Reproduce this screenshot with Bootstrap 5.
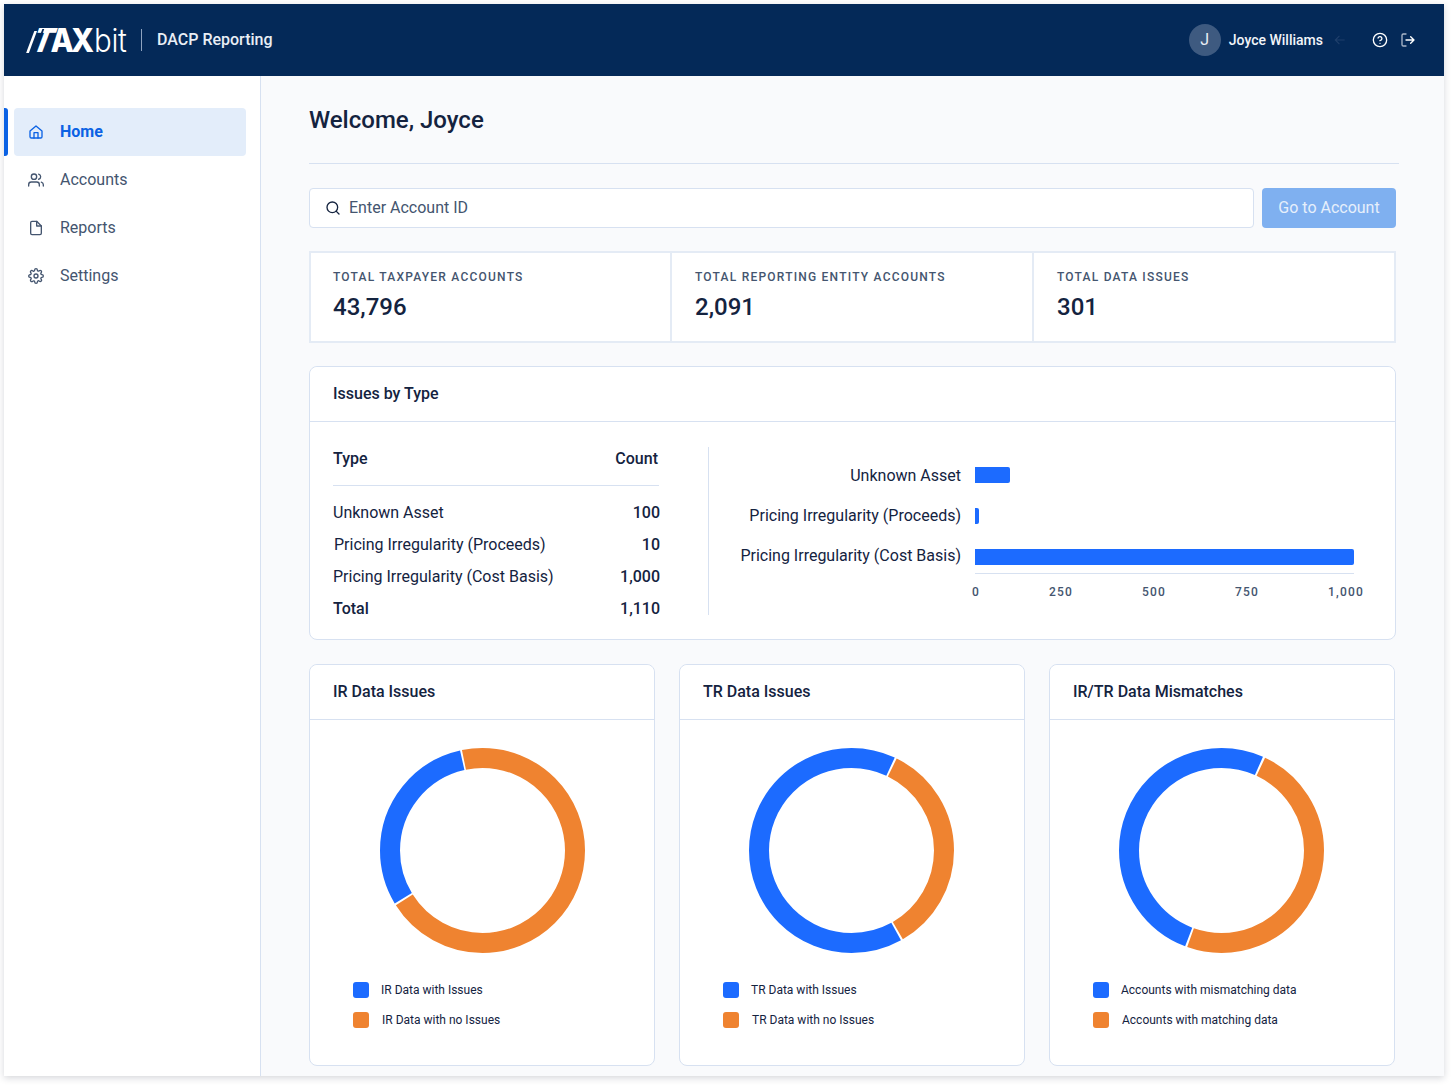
<!DOCTYPE html>
<html lang="en">
<head>
<meta charset="utf-8">
<title>DACP Reporting</title>
<link href="https://cdn.jsdelivr.net/npm/bootstrap@5.3.0/dist/css/bootstrap.min.css" rel="stylesheet">
<style>
html,body{background:#fff;height:100%;overflow:hidden}
body{font-family:Roboto,"Liberation Sans",sans-serif;color:#14233f;font-size:16px}
.app-frame{width:1440px;height:1072px;margin:4px;background:#f9fafc;box-shadow:0 2px 7px rgba(20,30,50,.18);overflow:hidden;display:flex;flex-direction:column}
.top-bar{height:72px;background:#042958;color:#fff;padding:0 28px 0 24px;flex:none;flex-wrap:nowrap}
.brand-mark{font-family:Inter,Roboto,sans-serif;font-size:33px;line-height:33px;color:#fff;display:flex;align-items:baseline;width:98px;position:relative;white-space:nowrap;transform:scaleX(.92);transform-origin:left center}
.brand-tax{font-weight:800;letter-spacing:-3px;display:inline-flex}
.brand-t{display:inline-block;transform:skewX(-22deg);position:relative;margin-left:6px;margin-right:-1px}
.brand-t::before{content:"";position:absolute;left:-3px;top:7px;width:3px;height:22px;background:#fff}
.brand-t::after{content:"";position:absolute;left:5px;top:5px;width:1.5px;height:24px;background:#042958}
.brand-bit{font-weight:300;font-size:32px;margin-left:3px;letter-spacing:-.4px}
.brand-sep{width:1px;height:22px;background:#8fa3bf;margin:0 15px}
.brand-name{font-size:16px;font-weight:500;color:#e9eef5}
.avatar-dot{width:32px;height:32px;border-radius:50%;background:#3e5a80;color:#e8edf4;font-size:16px;line-height:32px;text-align:center}
.user-name{font-size:14px;font-weight:500;margin-left:8px;color:#f2f5f9}
.ghost-arrow{margin-left:10px;margin-right:25px;color:#1f3f6b}
.shell{flex:1;min-height:0}
.side-nav{width:257px;flex:none;background:#fff;border-right:1px solid #d7e1f1;padding-top:32px}
.side-link{height:48px;margin:0 14px 0 10px;padding-left:14px;display:flex;align-items:center;gap:16px;color:#44556f;font-size:16px;text-decoration:none;border-radius:4px;position:relative}
.side-link.is-on{background:#e3edfa;color:#0b62e4;font-weight:700}
.side-link.is-on::before{content:"";position:absolute;left:-10px;top:0;bottom:0;width:4px;background:#0b62e4;border-radius:0 3px 3px 0}
.side-link svg{flex:none}
.main-pane{flex:1;min-width:0;padding:28px 48px 0}
.page-title{font-size:24px;line-height:32px;font-weight:500;margin:0;color:#14233f}
.title-rule{height:1px;background:#d7e1f1;margin:27px -3px 24px 0}
.search-box{flex:1;position:relative}
.search-box svg{position:absolute;left:16px;top:12px}
.search-box .form-control{height:40px;border:1px solid #d7e1f1;border-radius:4px;padding:5px 12px 7px 39px;font-size:16px;color:#44556f}
.search-box .form-control::placeholder{color:#44556f;opacity:1}
.go-btn,.go-btn:disabled{width:134px;height:40px;background:#7fb0f0;border:0;color:#e6effb;font-size:16px;border-radius:4px;opacity:1;padding:0}
.stat-strip{margin-top:23px;border:2px solid #e4ebf5;background:#fff;height:92px}
.stat-cell{width:362px;flex:none;padding:15px 22px 0 23px;border-left:2px solid #e4ebf5}
.stat-cell:first-child{border-left:0;width:359px;padding-left:22px}
.stat-cell:last-child{flex:1;width:auto}
.stat-label{font-size:12px;font-weight:500;letter-spacing:1.22px;color:#44556f;line-height:18px}
.stat-value{font-size:24px;font-weight:500;line-height:32px;margin-top:5px;color:#14233f}
.pane-card{border:1px solid #d7e1f1;border-radius:8px;background:#fff}
.pane-card .card-header{height:55px;padding:0 23px;background:#fff;border-bottom:1px solid #d7e1f1;font-size:16px;font-weight:500;display:flex;align-items:center;border-radius:8px 8px 0 0}
.issues-card{margin-top:23px;height:274px}
.issues-table{width:326px;flex:none;margin:26px 0 0 23px}
.it-head{display:flex;justify-content:space-between;font-weight:500;font-size:16px;line-height:22px;padding:0 1px 15px 0;border-bottom:1px solid #d7e1f1;margin-bottom:11px}
.it-row{display:flex;justify-content:space-between;line-height:32px;height:32px;margin-right:-1px}
.it-num{font-weight:500}
.it-total{font-weight:500}
.nudge-one{margin-left:1px}
.vert-rule{width:1px;height:168px;background:#d7e1f1;margin:25px 0 0 49px;flex:none}
.bar-chart{flex:1;margin:33px 0 0 0}
.bc-row{display:flex;align-items:center;height:40px}
.bc-label{width:266px;text-align:right;padding:2px 14px 0 0;color:#14233f;font-size:16px;flex:none;white-space:nowrap}
.bc-track{width:379px;height:100%;display:flex;align-items:center}
.bc-bar{height:16px;background:#1c6bff;border-radius:0 2px 2px 0}
.bar-mid{margin-top:2px}
.bar-low{margin-top:4px}
.bc-axis{margin-left:266px;width:379px;height:1px;background:#d7e1f1;margin-top:-2px}
.bc-ticks{margin-left:263px;width:392px;display:flex;justify-content:space-between;font-size:12px;font-weight:500;color:#44556f;letter-spacing:1.2px;margin-top:10px;line-height:16px}
.donut-grid{grid-template-columns:repeat(3,346px);margin-top:24px}
.donut-card{height:402px}
.donut-body{padding:28px 0 0 43px}
.donut-svg{display:block;margin-left:26px}
.first-donut{margin-left:27px}
.leg-list{margin-top:22px;font-size:12px;color:#14233f}
.leg-item{display:flex;align-items:center;height:30px;gap:12px}
.leg-swatch{width:16px;height:16px;border-radius:3px;flex:none}
.sw-blue{background:#1c6bff}
.sw-orange{background:#ef8330}
.ring-blue{stroke:#1c6bff}
.ring-orange{stroke:#ef8330}
</style>
</head>
<body>
<div class="app-frame">
  <nav class="navbar top-bar d-flex align-items-center">
    <div class="d-flex align-items-center">
      <div class="brand-mark"><span class="brand-tax"><span class="brand-t">T</span>AX</span><span class="brand-bit">bit</span></div>
      <span class="brand-sep"></span>
      <span class="brand-name">DACP Reporting</span>
    </div>
    <div class="d-flex align-items-center">
      <span class="avatar-dot">J</span>
      <span class="user-name">Joyce Williams</span>
      <svg class="ghost-arrow" width="14" height="14" viewBox="0 0 24 24" fill="none" stroke="currentColor" stroke-width="2"><path d="M20 12H4M11 5l-7 7 7 7"/></svg>
      <svg class="me-1" width="16" height="16" viewBox="0 0 24 24" fill="none" stroke="#fff" stroke-width="2" stroke-linecap="round" stroke-linejoin="round"><circle cx="12" cy="12" r="10"/><path d="M9.09 9a3 3 0 0 1 5.83 1c0 2-3 3-3 3"/><path d="M12 17h.01"/></svg>
      <svg class="ms-2" width="16" height="16" viewBox="0 0 24 24" fill="none" stroke-width="2" stroke-linecap="round" stroke-linejoin="round"><path stroke="#aab7c9" d="M9 21H5a2 2 0 0 1-2-2V5a2 2 0 0 1 2-2h4"/><path stroke="#fff" d="M16 17l5-5-5-5M21 12H9"/></svg>
    </div>
  </nav>
  <div class="shell d-flex">
    <aside class="side-nav">
      <a class="side-link is-on" href="#">
        <svg width="16" height="16" viewBox="0 0 24 24" fill="none" stroke="currentColor" stroke-width="2" stroke-linecap="round" stroke-linejoin="round"><path d="M3 10.5 12 3l9 7.5V19a2 2 0 0 1-2 2H5a2 2 0 0 1-2-2z"/><path d="M9 21v-8h6v8"/></svg>
        Home</a>
      <a class="side-link" href="#">
        <svg width="16" height="16" viewBox="0 0 24 24" fill="none" stroke="currentColor" stroke-width="2" stroke-linecap="round" stroke-linejoin="round"><path d="M17 21v-2a4 4 0 0 0-4-4H5a4 4 0 0 0-4 4v2"/><circle cx="9" cy="7" r="4"/><path d="M23 21v-2a4 4 0 0 0-3-3.87"/><path d="M16 3.13a4 4 0 0 1 0 7.75"/></svg>
        Accounts</a>
      <a class="side-link" href="#">
        <svg width="16" height="16" viewBox="0 0 24 24" fill="none" stroke="currentColor" stroke-width="2" stroke-linecap="round" stroke-linejoin="round"><path d="M13 2H6a2 2 0 0 0-2 2v16a2 2 0 0 0 2 2h12a2 2 0 0 0 2-2V9z"/><path d="M13 2v7h7"/></svg>
        Reports</a>
      <a class="side-link" href="#">
        <svg width="16" height="16" viewBox="0 0 24 24" fill="none" stroke="currentColor" stroke-width="2" stroke-linecap="round" stroke-linejoin="round"><circle cx="12" cy="12" r="3"/><path d="M19.4 15a1.65 1.65 0 0 0 .33 1.82l.06.06a2 2 0 0 1 0 2.83 2 2 0 0 1-2.83 0l-.06-.06a1.65 1.65 0 0 0-1.82-.33 1.65 1.65 0 0 0-1 1.51V21a2 2 0 0 1-2 2 2 2 0 0 1-2-2v-.09A1.65 1.65 0 0 0 9 19.4a1.65 1.65 0 0 0-1.82.33l-.06.06a2 2 0 0 1-2.83 0 2 2 0 0 1 0-2.83l.06-.06a1.65 1.65 0 0 0 .33-1.82 1.65 1.65 0 0 0-1.51-1H3a2 2 0 0 1-2-2 2 2 0 0 1 2-2h.09A1.65 1.65 0 0 0 4.6 9a1.65 1.65 0 0 0-.33-1.82l-.06-.06a2 2 0 0 1 0-2.83 2 2 0 0 1 2.83 0l.06.06a1.65 1.65 0 0 0 1.82.33H9a1.65 1.65 0 0 0 1-1.51V3a2 2 0 0 1 2-2 2 2 0 0 1 2 2v.09a1.65 1.65 0 0 0 1 1.51 1.65 1.65 0 0 0 1.82-.33l.06-.06a2 2 0 0 1 2.83 0 2 2 0 0 1 0 2.83l-.06.06a1.65 1.65 0 0 0-.33 1.82V9a1.65 1.65 0 0 0 1.51 1H21a2 2 0 0 1 2 2 2 2 0 0 1-2 2h-.09a1.65 1.65 0 0 0-1.51 1z"/></svg>
        Settings</a>
    </aside>
    <main class="main-pane">
      <h1 class="page-title">Welcome, Joyce</h1>
      <div class="title-rule"></div>
      <div class="d-flex gap-2">
        <div class="search-box">
          <svg width="16" height="16" viewBox="0 0 24 24" fill="none" stroke="#14233f" stroke-width="2" stroke-linecap="round"><circle cx="11" cy="11" r="8"/><path d="m21 21-4.35-4.35"/></svg>
          <input class="form-control" type="text" placeholder="Enter Account ID">
        </div>
        <button class="btn go-btn" disabled>Go to Account</button>
      </div>
      <section class="stat-strip d-flex">
        <div class="stat-cell"><div class="stat-label">TOTAL TAXPAYER ACCOUNTS</div><div class="stat-value">43,796</div></div>
        <div class="stat-cell"><div class="stat-label">TOTAL REPORTING ENTITY ACCOUNTS</div><div class="stat-value">2,091</div></div>
        <div class="stat-cell"><div class="stat-label">TOTAL DATA ISSUES</div><div class="stat-value">301</div></div>
      </section>
      <section class="card pane-card issues-card">
        <div class="card-header">Issues by Type</div>
        <div class="d-flex">
          <div class="issues-table">
            <div class="it-head"><span>Type</span><span>Count</span></div>
            <div class="it-row"><span>Unknown Asset</span><span class="it-num">100</span></div>
            <div class="it-row"><span class="nudge-one">Pricing Irregularity (Proceeds)</span><span class="it-num">10</span></div>
            <div class="it-row"><span>Pricing Irregularity (Cost Basis)</span><span class="it-num">1,000</span></div>
            <div class="it-row it-total"><span>Total</span><span class="it-num">1,110</span></div>
          </div>
          <div class="vert-rule"></div>
          <div class="bar-chart">
            <div class="bc-row"><div class="bc-label">Unknown Asset</div><div class="bc-track"><div class="bc-bar" style="width:35px"></div></div></div>
            <div class="bc-row"><div class="bc-label">Pricing Irregularity (Proceeds)</div><div class="bc-track"><div class="bc-bar bar-mid" style="width:4px"></div></div></div>
            <div class="bc-row"><div class="bc-label">Pricing Irregularity (Cost Basis)</div><div class="bc-track"><div class="bc-bar bar-low" style="width:379px"></div></div></div>
            <div class="bc-axis"></div>
            <div class="bc-ticks"><span>0</span><span>250</span><span>500</span><span>750</span><span>1,000</span></div>
          </div>
        </div>
      </section>
      <div class="d-grid gap-4 donut-grid">
        <div class="card pane-card donut-card">
          <div class="card-header">IR Data Issues</div>
          <div class="donut-body">
            <svg class="donut-svg first-donut" width="205" height="205" viewBox="0 0 205 205" fill="none" stroke-width="20">
              <g transform="rotate(-90 102.5 102.5)">
                <circle class="ring-orange" cx="102.5" cy="102.5" r="92.5" pathLength="360" stroke-dasharray="249.3 110.7" stroke-dashoffset="11.6"/>
                <circle class="ring-blue" cx="102.5" cy="102.5" r="92.5" pathLength="360" stroke-dasharray="108.4 251.6" stroke-dashoffset="121.1"/>
              </g>
            </svg>
            <div class="leg-list">
              <div class="leg-item"><span class="leg-swatch sw-blue"></span>IR Data with Issues</div>
              <div class="leg-item"><span class="leg-swatch sw-orange"></span><span class="nudge-one">IR Data with no Issues</span></div>
            </div>
          </div>
        </div>
        <div class="card pane-card donut-card">
          <div class="card-header">TR Data Issues</div>
          <div class="donut-body">
            <svg class="donut-svg" width="205" height="205" viewBox="0 0 205 205" fill="none" stroke-width="20">
              <g transform="rotate(-90 102.5 102.5)">
                <circle class="ring-orange" cx="102.5" cy="102.5" r="92.5" pathLength="360" stroke-dasharray="123.7 236.3" stroke-dashoffset="-26.2"/>
                <circle class="ring-blue" cx="102.5" cy="102.5" r="92.5" pathLength="360" stroke-dasharray="233.9 126.1" stroke-dashoffset="-151.1"/>
              </g>
            </svg>
            <div class="leg-list">
              <div class="leg-item"><span class="leg-swatch sw-blue"></span>TR Data with Issues</div>
              <div class="leg-item"><span class="leg-swatch sw-orange"></span><span class="nudge-one">TR Data with no Issues</span></div>
            </div>
          </div>
        </div>
        <div class="card pane-card donut-card">
          <div class="card-header">IR/TR Data Mismatches</div>
          <div class="donut-body">
            <svg class="donut-svg" width="205" height="205" viewBox="0 0 205 205" fill="none" stroke-width="20">
              <g transform="rotate(-90 102.5 102.5)">
                <circle class="ring-orange" cx="102.5" cy="102.5" r="92.5" pathLength="360" stroke-dasharray="174.4 185.6" stroke-dashoffset="-25.2"/>
                <circle class="ring-blue" cx="102.5" cy="102.5" r="92.5" pathLength="360" stroke-dasharray="183.1 176.9" stroke-dashoffset="-200.8"/>
              </g>
            </svg>
            <div class="leg-list">
              <div class="leg-item"><span class="leg-swatch sw-blue"></span>Accounts with mismatching data</div>
              <div class="leg-item"><span class="leg-swatch sw-orange"></span><span class="nudge-one">Accounts with matching data</span></div>
            </div>
          </div>
        </div>
      </div>
    </main>
  </div>
</div>
<script src="https://cdn.jsdelivr.net/npm/bootstrap@5.3.0/dist/js/bootstrap.bundle.min.js"></script>
</body>
</html>
